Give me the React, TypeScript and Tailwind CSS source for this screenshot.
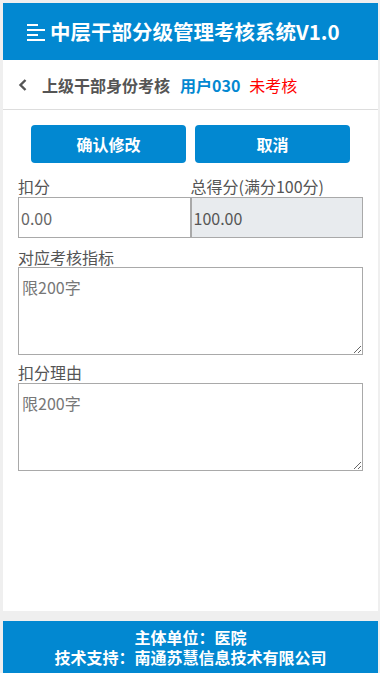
const font = { fontFamily: '"Noto Sans CJK SC", "Open Sans", sans-serif' };

function MenuIcon() {
  return (
    <svg width="19" height="18" viewBox="0 0 19 18" className="shrink-0">
      <rect x="0" y="1" width="11" height="2" fill="#fff" />
      <rect x="0" y="6" width="18" height="2" fill="#fff" />
      <rect x="0" y="11" width="11" height="2" fill="#fff" />
      <rect x="0" y="16" width="18" height="2" fill="#fff" />
    </svg>
  );
}

function BackIcon() {
  return (
    <svg width="10" height="14" viewBox="0 0 10 14" className="shrink-0">
      <path d="M7.5 2 L2.5 7 L7.5 12" fill="none" stroke="#555" strokeWidth="2.4" />
    </svg>
  );
}

export default function App() {
  return (
    <div
      className="flex h-[673px] w-[380px] flex-col bg-[#efefef] pl-[3px] pr-[2px] pt-[3px]"
      style={font}
    >
      {/* header */}
      <div className="flex h-[57px] shrink-0 items-center gap-[4px] bg-[#0288d1] pl-[24px]">
        <MenuIcon />
        <span className="text-[20.5px] font-bold leading-none text-white">
          中层干部分级管理考核系统V1.0
        </span>
      </div>

      <div className="flex flex-1 flex-col bg-white">
        {/* sub header */}
        <div className="flex h-[50px] items-center border-b border-[#dddddd] pl-[15px]">
          <BackIcon />
          <span className="ml-[14px] text-[16px] font-bold text-[#555]">上级干部身份考核</span>
          <span className="ml-[10px] text-[16px] font-bold text-[#0288d1]">用户030</span>
          <span className="ml-[9px] text-[16px] text-[#ff0000]">未考核</span>
        </div>

        {/* buttons */}
        <div className="mt-[15px] flex gap-[9px] px-[28px]">
          <button className="h-[38px] flex-1 rounded-[4px] bg-[#0288d1] text-[16px] font-bold text-white">
            确认修改
          </button>
          <button className="h-[38px] flex-1 rounded-[4px] bg-[#0288d1] text-[16px] font-bold text-white">
            取消
          </button>
        </div>

        {/* form */}
        <div className="pl-[15px] pr-[15px]">
          <div className="mt-[13px] grid grid-cols-2">
            <div className="flex flex-col">
              <span className="h-[21px] text-[16px] leading-[21px] text-[#555]">扣分</span>
              <input
                defaultValue="0.00"
                className="h-[41px] w-full border border-[#a9a9a9] bg-white px-[2px] text-[16px] text-[#666] outline-none"
              />
            </div>
            <div className="flex flex-col">
              <span className="h-[21px] text-[16px] leading-[21px] text-[#555]">总得分(满分100分)</span>
              <input
                defaultValue="100.00"
                disabled
                className="h-[41px] w-full border border-[#a9a9a9] bg-[#e8ebee] px-[2px] text-[16px] text-[#555] outline-none"
              />
            </div>
          </div>

          <div className="mt-[9px] flex flex-col">
            <span className="h-[20px] text-[16px] leading-[20px] text-[#555]">对应考核指标</span>
            <textarea
              placeholder="限200字"
              className="h-[88px] w-full border border-[#a9a9a9] px-[3px] py-[9px] text-[16px] leading-[20px] text-[#333] outline-none placeholder:text-[#777]"
            />
          </div>

          <div className="mt-[7px] flex flex-col">
            <span className="h-[21px] text-[16px] leading-[21px] text-[#555]">扣分理由</span>
            <textarea
              placeholder="限200字"
              className="h-[88px] w-full border border-[#a9a9a9] px-[3px] py-[9px] text-[16px] leading-[20px] text-[#333] outline-none placeholder:text-[#777]"
            />
          </div>
        </div>
      </div>

      {/* footer */}
      <div className="mt-[10px] flex h-[52px] shrink-0 flex-col items-center bg-[#0288d1] pt-[6px] text-[16px] font-bold leading-[20px] text-white">
        <span>主体单位：医院</span>
        <span>技术支持：南通苏慧信息技术有限公司</span>
      </div>
    </div>
  );
}
